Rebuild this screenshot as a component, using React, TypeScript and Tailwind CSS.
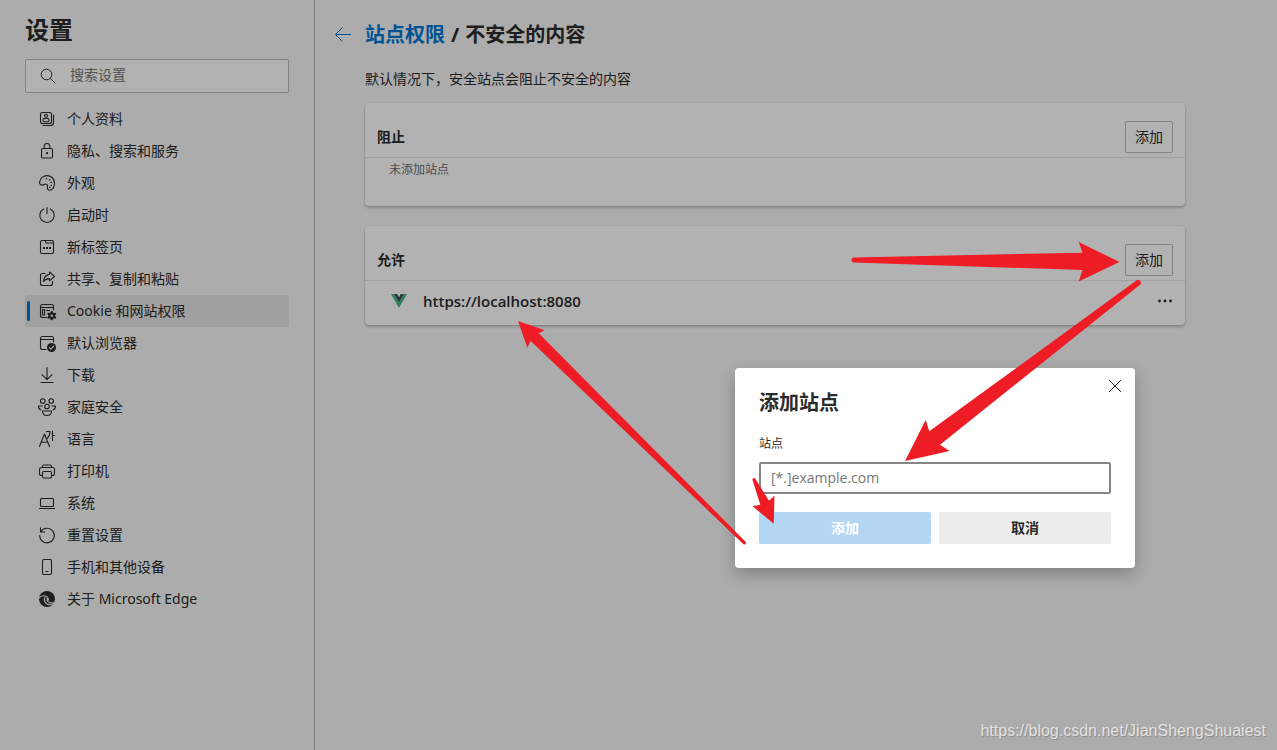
import type { ReactNode } from "react";

function Icon({ children }: { children: ReactNode }) {
  return (
    <svg
      viewBox="0 0 20 20"
      className="size-5 shrink-0"
      fill="none"
      stroke="currentColor"
      strokeWidth="1.1"
      strokeLinecap="round"
      strokeLinejoin="round"
      aria-hidden="true"
    >
      {children}
    </svg>
  );
}

const navItems: { label: ReactNode; id: string; icon: ReactNode; active?: boolean }[] = [
  {
    id: "profile",
    label: "个人资料",
    icon: (
      <>
        <rect x="3.5" y="3.5" width="11" height="11" rx="2" />
        <circle cx="9" cy="6.8" r="1.5" />
        <rect x="6" y="9.5" width="6" height="3.2" rx="1.2" />
        <path d="M16.5 6v7.5a3 3 0 0 1-3 3H6" />
      </>
    ),
  },
  {
    id: "privacy",
    label: "隐私、搜索和服务",
    icon: (
      <>
        <rect x="4.5" y="7.5" width="11" height="9.5" rx="1.2" />
        <path d="M7.2 7.5V5.3a2.8 2.8 0 0 1 5.6 0v2.2" />
        <circle cx="10" cy="12.2" r=".6" fill="currentColor" />
      </>
    ),
  },
  {
    id: "appearance",
    label: "外观",
    icon: (
      <>
        <path d="M2.600 9.200C3.200 5.300 6.300 2.600 10 2.600c4.300 0 7.500 3.200 7.500 7.500 0 3.700-2 7.200-4.600 7.200-2.300 0-2.700-1.700-2.500-3.300.2-1.700-.4-3-1.900-3-1.300 0-1.600 1-2.900 1.100-1.700.1-3.200-1.200-3-2.900Z" />
        <g fill="currentColor" stroke="none">
          <circle cx="9.500" cy="5.800" r=".8" />
          <circle cx="12.600" cy="6.800" r=".8" />
          <circle cx="14.300" cy="9.400" r=".8" />
          <circle cx="14.200" cy="12.200" r=".8" />
          <circle cx="12.800" cy="14.400" r=".8" />
        </g>
      </>
    ),
  },
  {
    id: "startup",
    label: "启动时",
    icon: <path d="M10 2.500v6M6.700 3.900a7.200 7.200 0 1 0 6.600 0" />,
  },
  {
    id: "newtab",
    label: "新标签页",
    icon: (
      <>
        <rect x="3.500" y="3.500" width="13" height="13" rx="1.500" />
        <path d="M8.500 3.500v1.200a1.300 1.300 0 0 0 1.300 1.300h6.700" />
        <g fill="currentColor" stroke="none">
          <rect x="6" y="10" width="2" height="2" />
          <rect x="9" y="10" width="2" height="2" />
          <rect x="12" y="10" width="2" height="2" />
        </g>
      </>
    ),
  },
  {
    id: "share",
    label: "共享、复制和粘贴",
    icon: (
      <>
        <path d="M8 4.500H5.500a2 2 0 0 0-2 2v8a2 2 0 0 0 2 2h8a2 2 0 0 0 2-2v-2" />
        <path d="M12.500 3l5 4.500-5 4.300V9.600c-2.600-.1-4.500.8-6 2.900.2-3.800 2.200-6.600 6-7.100V3Z" />
      </>
    ),
  },
  {
    id: "permissions",
    label: "Cookie 和网站权限",
    active: true,
    icon: (
      <>
        <path d="M9.500 16.500h-4a2 2 0 0 1-2-2v-9a2 2 0 0 1 2-2h9a2 2 0 0 1 2 2v3.500M3.500 6.500h13M9.500 9.500h3" />
        <rect x="5.500" y="8.500" width="2" height="5.500" />
        <path
          fill="currentColor"
          stroke="none"
          fillRule="evenodd"
          d="M14 10h1.500l.5 1.500 1 .6 1.500-.4.800 1.400-1.100 1v1.200l1.100 1.100-.8 1.300-1.500-.4-1 .6-.5 1.400H14l-.5-1.400-1-.6-1.500.4-.8-1.300 1.100-1.100v-1.200l-1.100-1 .8-1.400 1.500.4 1-.6.5-1.500Zm.750 3.400a1.300 1.300 0 1 0 0 2.600 1.300 1.300 0 0 0 0-2.600Z"
        />
      </>
    ),
  },
  {
    id: "default-browser",
    label: "默认浏览器",
    icon: (
      <>
        <path d="M9 16.500H5.500a2 2 0 0 1-2-2v-9a2 2 0 0 1 2-2h9a2 2 0 0 1 2 2V9M3.500 6.500h13" />
        <circle cx="14.500" cy="14.500" r="4.500" fill="currentColor" stroke="none" />
        <path d="m12.400 14.700 1.400 1.400 2.900-2.900" stroke="#f7f7f7" />
      </>
    ),
  },
  {
    id: "downloads",
    label: "下载",
    icon: <path d="M10 2.500v12M5 9.700l5 5 5-5M4 17.500h12" />,
  },
  {
    id: "family",
    label: "家庭安全",
    icon: (
      <>
        <circle cx="5.800" cy="4" r="2.300" />
        <circle cx="14.200" cy="4" r="2.300" />
        <circle cx="10" cy="9.500" r="2.300" />
        <path d="M5.500 14h9c0 2.800-2 4.500-4.500 4.500S5.500 16.800 5.500 14ZM4 13C2.300 12.500 1.500 11 1.500 9h3.700M16 13c1.700-.5 2.500-2 2.500-4h-3.700" />
      </>
    ),
  },
  {
    id: "languages",
    label: "语言",
    icon: (
      <>
        <path d="m2.500 17.500 5-12.500 5 12.500M4.300 13.200h6.400" />
        <path d="M9.500 2.500H13c0 3-1 5.300-2.800 6.800M15.500 2v9.500M15.500 6.500h2" />
      </>
    ),
  },
  {
    id: "printers",
    label: "打印机",
    icon: (
      <>
        <path d="M5.500 14.500h-1a2 2 0 0 1-2-2v-4a2 2 0 0 1 2-2h11a2 2 0 0 1 2 2v4a2 2 0 0 1-2 2h-1M5.500 6.500v-1a1.500 1.500 0 0 1 1.500-1.500h6a1.500 1.500 0 0 1 1.500 1.500v1" />
        <rect x="5.500" y="10.500" width="9" height="6.500" rx="1.200" />
      </>
    ),
  },
  {
    id: "system",
    label: "系统",
    icon: (
      <>
        <rect x="3.500" y="5.500" width="13" height="8" rx="1" />
        <path d="M2.500 15.500h15" />
      </>
    ),
  },
  {
    id: "reset",
    label: "重置设置",
    icon: <path d="M3.500 2.800v4.200h4.200M3.700 6.800a7.300 7.300 0 1 1-1 3.700" />,
  },
  {
    id: "phone",
    label: "手机和其他设备",
    icon: (
      <>
        <rect x="5.500" y="2.500" width="9" height="15" rx="1.500" />
        <path d="M9 14.500h2" />
      </>
    ),
  },
  {
    id: "about",
    label: "关于 Microsoft Edge",
    icon: (
      <>
        <circle cx="10" cy="10" r="8" fill="currentColor" stroke="none" />
        <g stroke="#f7f7f7" strokeWidth="1.100">
          <path d="M2.200 8.800c2-2.400 6-2.800 8.400-.6" />
          <path d="M8.200 8c-2.300 3 .2 7.600 4.600 7.600 1.500 0 2.800-.5 3.800-1.300" />
        </g>
        <path
          d="M10.200 8.200c1.700.2 2.300 1.900 1.300 3.300-.5.900.7 1.700 2.500 1.700 1.500 0 2.900-.5 4.200-1.800l-1.300 1.900c-1.600 1-4.200 1.200-5.600.3-1.800-1.200-2.100-3.600-1.100-5.400Z"
          fill="#f7f7f7"
          stroke="none"
        />
      </>
    ),
  },
];

function Sidebar() {
  return (
    <aside className="w-[315px] shrink-0 border-r border-[#b5b5b5] px-[25px] pt-3">
      <h1 className="text-2xl leading-9 font-bold">设置</h1>
      <div className="mt-[11px] flex h-[34px] items-center rounded-xs border border-[#bababa] bg-white pl-3">
        <svg viewBox="0 0 20 20" className="size-5 shrink-0" fill="none" stroke="currentColor" aria-hidden="true">
          <circle cx="8.500" cy="8.500" r="5.300" />
          <path d="m12.400 12.400 5 5" />
        </svg>
        <input
          type="search"
          aria-label="搜索设置"
          placeholder="搜索设置"
          className="ml-3 min-w-0 flex-1 bg-transparent pb-[2px] text-sm outline-none placeholder:text-[#767676]"
        />
      </div>
      <nav className="mt-[10px]">
        {navItems.map((item) => (
          <a
            key={item.id}
            href="#"
            aria-current={item.active ? "page" : undefined}
            className={
              item.active
                ? "flex h-8 items-center rounded-xs bg-[#e5e5e5] pl-[2px]"
                : "flex h-8 items-center pl-[2px]"
            }
          >
            <span className={item.active ? "h-5 w-[3px] rounded-xs bg-[#0078d4]" : "h-5 w-[3px]"} />
            <span className="ml-[7px] flex items-center gap-[10px] text-sm">
              <Icon>{item.icon}</Icon>
              {item.label}
            </span>
          </a>
        ))}
      </nav>
    </aside>
  );
}

function SiteCard({ title, children }: { title: string; children: ReactNode }) {
  return (
    <section className="rounded-sm bg-white shadow-[0_0_2px_rgba(0,0,0,0.15),0_2px_3px_rgba(0,0,0,0.2)]">
      <header className="flex items-center justify-between border-b border-[#e5e5e5] px-3 pt-[18px] pb-1">
        <h2 className="text-sm font-bold">{title}</h2>
        <button type="button" className="h-8 w-12 rounded-xs border border-[#bababa] text-sm">
          添加
        </button>
      </header>
      {children}
    </section>
  );
}

function Content() {
  return (
    <main className="min-w-0 flex-1 pt-5 pr-5 pl-[18px]">
      <div className="flex items-center gap-3">
        <a href="#" aria-label="返回" className="text-[#0078d4]">
          <svg viewBox="0 0 20 20" className="size-5" fill="none" stroke="currentColor" aria-hidden="true">
            <path d="M18 9.500H2.500M9.500 2.500l-7 7 7 7" />
          </svg>
        </a>
        <h1 className="flex gap-[6px] text-xl leading-[30px] font-bold">
          <a href="#" className="text-[#0078d4]">
            站点权限
          </a>
          <span>/</span>
          <span>不安全的内容</span>
        </h1>
      </div>
      <div className="ml-8 max-w-[820px]">
        <p className="mt-[19px] text-sm">默认情况下，安全站点会阻止不安全的内容</p>
        <div className="mt-[14px] flex flex-col gap-5">
          <SiteCard title="阻止">
            <p className="h-12 px-6 pt-1 text-xs text-[#6f6f6f]">未添加站点</p>
          </SiteCard>
          <SiteCard title="允许">
            <div className="flex h-11 items-center pr-3 pb-1 pl-[26px]">
              <svg viewBox="0 0 16 16" className="size-4" aria-hidden="true">
                <path d="M0 1h3.200L8 9.300 12.800 1H16L8 15Z" fill="#41b883" />
                <path d="M3.200 1h3L8 4.200 9.800 1h3L8 9.300Z" fill="#35495e" />
              </svg>
              <span className="ml-4 flex-1 font-['Open_Sans',sans-serif] text-[15px] leading-5 font-semibold">
                https://localhost:8080
              </span>
              <button type="button" aria-label="更多操作" className="size-4">
                <svg viewBox="0 0 16 16" className="size-4" fill="currentColor" aria-hidden="true">
                  <circle cx="2.500" cy="8" r="1.400" />
                  <circle cx="8" cy="8" r="1.400" />
                  <circle cx="13.500" cy="8" r="1.400" />
                </svg>
              </button>
            </div>
          </SiteCard>
        </div>
      </div>
    </main>
  );
}

function AddSiteDialog() {
  return (
    <div
      role="dialog"
      aria-modal="true"
      aria-labelledby="dialog-title"
      className="absolute top-[368px] left-[735px] w-[400px] rounded-sm bg-white p-6 pt-[18px] shadow-[0_6px_16px_rgba(0,0,0,0.25)]"
    >
      <button type="button" aria-label="关闭" className="absolute top-[10px] right-3 size-4">
        <svg viewBox="0 0 16 16" className="size-4" fill="none" stroke="currentColor" aria-hidden="true">
          <path d="m2 2 12 12M14 2 2 14" />
        </svg>
      </button>
      <h2 id="dialog-title" className="text-xl leading-[34px] font-bold">
        添加站点
      </h2>
      <label htmlFor="site" className="mt-4 block text-xs leading-4">
        站点
      </label>
      <input
        id="site"
        type="text"
        placeholder="[*.]example.com"
        className="mt-[10px] h-8 w-full rounded-xs border-2 border-[#868686] px-[10px] pb-[2px] font-['Open_Sans','Noto_Sans_CJK_SC',sans-serif] text-sm outline-none placeholder:text-[#767676]"
      />
      <div className="mt-[18px] grid grid-cols-2 gap-2 text-sm font-bold">
        <button type="button" className="h-8 rounded-xs bg-[#b3d6f2] text-white">
          添加
        </button>
        <button type="button" className="h-8 rounded-xs bg-[#ededed]">
          取消
        </button>
      </div>
    </div>
  );
}

function Arrows() {
  return (
    <svg
      viewBox="0 0 1277 750"
      className="pointer-events-none absolute top-0 left-0 h-[750px] w-[1277px]"
      fill="#ee1c25"
      aria-hidden="true"
    >
      <path d="M854 257.500 1082.500 252.700 1078.700 242 1119.500 262 1078.700 281.500 1082.500 270 854 262.500A2.500 2.500 0 0 1 854 257.500Z" />
      <path d="M1136 280.800 929.300 431.300 925.700 420 905 461 949.500 451 940 444.700 1140 284.800A2.500 2.500 0 0 0 1136 280.800Z" />
      <path d="M755.500 479 769 500.700 774.500 495.700 773.700 523.700 752.700 506.300 760.300 504.700 752.500 480A1.600 1.600 0 0 1 755.500 479Z" />
      <path d="M745.500 541.700 538.700 333.300 544.700 330.300 518 321 527.300 347.500 530.700 341 743.200 544A1.600 1.600 0 0 0 745.500 541.700Z" />
    </svg>
  );
}

export default function App() {
  return (
    <div className="relative flex min-h-screen overflow-hidden bg-[#f7f7f7] font-['Noto_Sans','Noto_Sans_CJK_SC',sans-serif] text-[#2b2b2b]">
      <Sidebar />
      <Content />
      <div className="absolute inset-0 bg-black/30" />
      <AddSiteDialog />
      <Arrows />
      <p className="absolute right-[11px] bottom-[7px] font-['Liberation_Sans',sans-serif] text-base leading-6 text-[#e2e2e2] [text-shadow:1px_1px_1px_rgba(0,0,0,0.2)]">
        https://blog.csdn.net/JianShengShuaiest
      </p>
    </div>
  );
}
